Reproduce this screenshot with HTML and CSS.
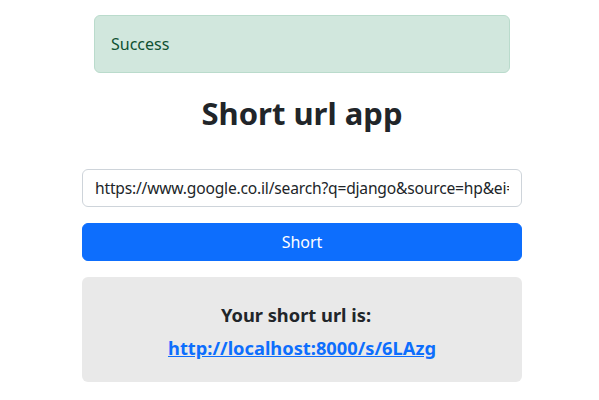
FILE: index.html
```html
<!DOCTYPE html>
<html lang="en">
<head>
<meta charset="utf-8">
<title>Short url app</title>
<link rel="stylesheet" href="styles.css">
</head>
<body>
<div class="container">
  <div class="alert">Success</div>
  <h1 class="title">Short url app</h1>
  <form class="form">
    <input class="field" type="text" value="https://www.google.co.il/search?q=django&amp;source=hp&amp;ei=abc123">
    <button class="btn" type="button">Short</button>
  </form>
  <div class="result">
    <h5 class="result-label">Your short url is:</h5>
    <h5 class="result-link"><a href="#">http://localhost:8000/s/6LAzg</a></h5>
  </div>
</div>
</body>
</html>
```
FILE: styles.css
```css
* { box-sizing: border-box; }
html, body { margin: 0; }
body {
  background: #fff;
  color: #212529;
  font-family: "Noto Sans", "Open Sans", sans-serif;
  font-size: 16px;
  line-height: 1.5;
  padding: 15px 0 0 5px;
}
.container {
  width: 440px;
  margin: 0 auto;
}
.alert {
  margin: 0 12px 16px;
  padding: 16px;
  background: #d1e7dd;
  border: 1px solid #badbcc;
  border-radius: 6px;
  color: #0f5132;
}
.title {
  margin: 0 0 37px;
  padding-top: 6px;
  text-align: center;
  font-size: 31px;
  font-weight: 700;
  line-height: 1.2;
}
.form {
  display: flex;
  flex-direction: column;
  gap: 16px;
  margin: 0 0 16px;
}
.field {
  display: block;
  width: 100%;
  height: 38px;
  padding: 6px 12px;
  border: 1px solid #ced4da;
  border-radius: 6px;
  font: inherit;
  font-size: 15.6px;
  letter-spacing: -0.19px;
  color: #212529;
  background: #fff;
}
.btn {
  display: block;
  width: 100%;
  height: 38px;
  border: 1px solid #0d6efd;
  border-radius: 6px;
  background: #0d6efd;
  color: #fff;
  font: inherit;
}
.result {
  height: 105px;
  background: #e9e9e9;
  border-radius: 6px;
  padding: 27px 16px 0;
  text-align: center;
}
.result-label, .result-link {
  margin: 0;
  font-size: 18.3px;
  font-weight: 700;
  line-height: 22px;
}
.result-label { margin-bottom: 11px; padding-right: 12px; }
.result-link a { color: #0d6efd; text-decoration: underline; }
```
